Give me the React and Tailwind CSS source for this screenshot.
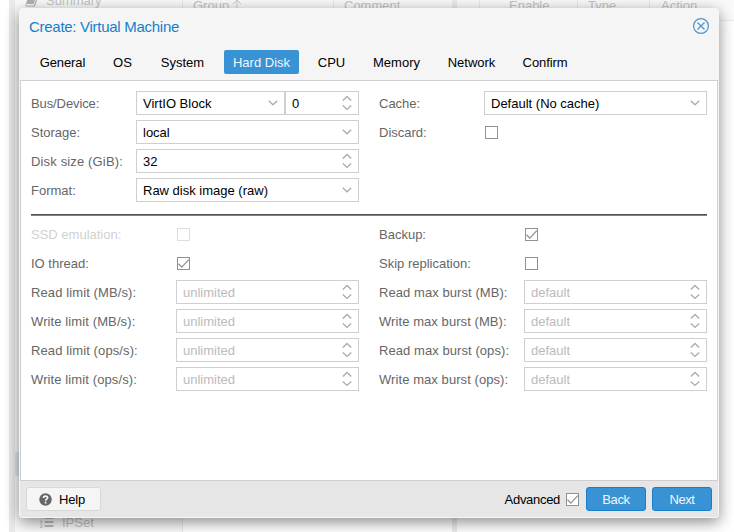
import React from "react";

const TABS = [
  ["General", "w-[63px]"],
  ["OS", "w-[37px]"],
  ["System", "w-[63px]"],
  ["Hard Disk", "w-[75px]"],
  ["CPU", "w-[45px]"],
  ["Memory", "w-[65px]"],
  ["Network", "w-[65px]"],
  ["Confirm", "w-[62px]"],
];

function Chevron() {
  return (
    <svg width="10" height="6" viewBox="0 0 10 6" className="shrink-0" fill="none" stroke="#adadad" strokeWidth="1.4">
      <path d="M.8 .8 5 4.8 9.200 .8" />
    </svg>
  );
}

function Spinner() {
  return (
    <svg width="10" height="16" viewBox="0 0 10 16" className="shrink-0" fill="none" stroke="#adadad" strokeWidth="1.4">
      <path d="M.8 5.500 5 1.500 9.200 5.500M.8 10.400 5 14.400 9.200 10.400" />
    </svg>
  );
}

function Field({ value, placeholder, spin, className = "flex-1" }) {
  return (
    <div className={`flex h-6 items-center justify-between border border-[#cfcfcf] bg-white pl-1.5 pr-[6px] ${className}`}>
      <span className={placeholder ? "text-[#bbbbbb]" : "text-black"}>{value}</span>
      {spin ? <Spinner /> : <Chevron />}
    </div>
  );
}

function Checkbox({ checked, disabled }) {
  return (
    <svg width="13" height="13" viewBox="0 0 13 13" className="shrink-0" fill="none">
      <rect x=".5" y=".5" width="12" height="12" fill="#fff" stroke={disabled ? "#dddddd" : "#919191"} />
      {checked && <path d="M1.5 6.800 4.800 10.100 11.800 2.600" stroke="#919191" strokeWidth="1.3" />}
    </svg>
  );
}

function Row({ label, wide, disabled, track = "", children }) {
  return (
    <div className="flex h-6 items-center">
      <span className={`shrink-0 ${track} ${wide ? "w-[145px]" : "w-[105px]"} ${disabled ? "text-[#d1d1d1]" : "text-[#666666]"}`}>
        {label}
      </span>
      {children}
    </div>
  );
}

function CheckRow({ checked, ...rest }) {
  return (
    <Row {...rest}>
      <div className="ml-px mt-px flex">
        <Checkbox checked={checked} disabled={rest.disabled} />
      </div>
    </Row>
  );
}

function Background() {
  return (
    <div className="flex h-full pl-[9px] text-[#c4c4c4]">
      <div className="w-[6px] bg-[#ebebeb]" />
      <div className="flex w-[168px] flex-col border-r border-[#e9e9e9] bg-[#fafafa]">
        <div className="flex h-5 items-start pl-[10px]">
          <svg width="13" height="7" viewBox="0 0 13 7" fill="none">
            <path d="M2.200 0H10L8.800 4H1z" fill="#b0b0b0" />
            <path d="M1 4.500Q.8 6 2 6H9.500L11.500 0" stroke="#b0b0b0" strokeWidth="1.200" />
          </svg>
          <span className="-mt-[9px] ml-2 leading-5">Summary</span>
        </div>
        <div className="mt-[432px] h-6 bg-[#dde7ed]" />
        <div className="mt-auto flex h-[20px] items-center pl-[25px]">
          <svg width="14" height="12" viewBox="0 0 14 12" fill="none" stroke="#bdbdbd">
            <path d="M4.500 2h9M4.500 6h9M4.500 10h9" strokeWidth="1.8" />
            <path d="M1.500 0v3M0 5h2L.5 7h2M0 9h2v2.500H0" strokeWidth=".8" />
          </svg>
          <span className="ml-[8px]">IPSet</span>
        </div>
      </div>
      <div className="flex h-[21px] w-[269px] border-b border-[#ececec] bg-[#fafafa] leading-5">
        <div className="flex w-[151px] border-r border-[#e9e9e9] pl-[10px]">
          <span className="-mt-[4px]">Group</span>
          <svg width="10" height="11" viewBox="0 0 10 11" fill="none" stroke="#cbcbcb" className="ml-[3px] -mt-px">
            <path d="M5 10.500V1M1 5 5 1 9 5" />
          </svg>
        </div>
        <span className="-mt-[4px] ml-[10px]">Comment</span>
      </div>
      <div className="w-[5px] bg-[#ececec]" />
      <div className="flex h-[21px] flex-1 border-b border-[#ececec] bg-[#fafafa] leading-5">
        <div className="w-[23px] border-r border-[#e9e9e9]" />
        <div className="w-[98px] border-r border-[#e9e9e9] pl-[29px]"><div className="-mt-[4px]">Enable</div></div>
        <div className="w-[72px] border-r border-[#e9e9e9] pl-[10px]"><div className="-mt-[4px]">Type</div></div>
        <div className="pl-[11px]"><div className="-mt-[4px]">Action</div></div>
      </div>
    </div>
  );
}

export default function App() {
  return (
    <div className="relative h-[532px] w-[734px] overflow-hidden bg-white font-['Liberation_Sans',Arial,sans-serif] text-[13px] leading-[17px] whitespace-nowrap">
      <Background />
      <div className="absolute left-[19px] top-2 flex h-[510px] w-[700px] flex-col rounded-[3px] border border-[#f5f5f5] bg-[#f5f5f5] shadow-[0_4px_15px_rgba(0,0,0,0.47)]">
        <div className="flex h-[34px] items-center justify-between pl-[9px] pr-[9px]">
          <span className="mt-px text-[15px] tracking-[-0.28px] text-[#157fcc]">Create: Virtual Machine</span>
          <svg width="16" height="16" viewBox="0 0 16 16" fill="none" stroke="#4b93cf">
            <circle cx="8" cy="8" r="7.400" strokeWidth="1.200" />
            <path d="M4.500 4.500 11.500 11.500M11.500 4.500 4.500 11.500" strokeWidth="1.200" />
          </svg>
        </div>
        <div className="mt-[7px] flex h-[31px] gap-[10px] pl-[11px]">
          {TABS.map(([name, width]) => (
            <div
              key={name}
              className={`flex h-6 items-center justify-center rounded-[2px] pt-px ${width} ${
                name === "Hard Disk" ? "bg-[#3892d4] text-[#f0f6fb]" : "text-black"
              } ${name === "General" || name === "Confirm" ? "tracking-[-0.1px]" : ""}`}
            >
              {name}
            </div>
          ))}
        </div>
        <div className="-mt-px h-[401px] border border-[#cfcfcf] bg-white pl-[10px] pr-[10px] pt-[10px]">
          <div className="flex gap-5">
            <div className="flex w-[328px] flex-col gap-[5px]">
              <Row label="Bus/Device:" track="tracking-[-0.1px]">
                <Field value="VirtIO Block" className="w-[149px]" />
                <Field value="0" spin />
              </Row>
              <Row label="Storage:"><Field value="local" /></Row>
              <Row label="Disk size (GiB):" track="tracking-[0.15px]"><Field value="32" spin /></Row>
              <Row label="Format:"><Field value="Raw disk image (raw)" /></Row>
            </div>
            <div className="flex w-[328px] flex-col gap-[5px]">
              <Row label="Cache:"><Field value="Default (No cache)" /></Row>
              <CheckRow label="Discard:" />
            </div>
          </div>
          <div className="mb-[6px] mt-[12px] h-[2px] border-t border-[#555555] bg-[#808080]" />
          <div className="flex gap-5">
            <div className="flex w-[328px] flex-col gap-[5px]">
              <CheckRow wide disabled label="SSD emulation:" />
              <CheckRow wide checked label="IO thread:" />
              {["Read limit (MB/s):", "Write limit (MB/s):", "Read limit (ops/s):", "Write limit (ops/s):"].map((label) => (
                <Row key={label} wide label={label} track="tracking-[0.11px]"><Field value="unlimited" placeholder spin /></Row>
              ))}
            </div>
            <div className="flex w-[328px] flex-col gap-[5px]">
              <CheckRow wide checked label="Backup:" />
              <CheckRow wide label="Skip replication:" />
              {["Read max burst (MB):", "Write max burst (MB):", "Read max burst (ops):", "Write max burst (ops):"].map((label) => (
                <Row key={label} wide label={label} track="tracking-[0.07px]"><Field value="default" placeholder spin /></Row>
              ))}
            </div>
          </div>
        </div>
        <div className="flex flex-1 items-center rounded-b-[2px] bg-[#e6e6e6] pl-[6px] pr-[6px]">
          <div className="flex h-6 w-[75px] items-center rounded-[3px] border border-[#d8d8d8] bg-[#f5f5f5] pl-3 text-black">
            <svg width="13" height="13" viewBox="0 0 13 13" fill="none">
              <circle cx="6.500" cy="6.500" r="6.200" fill="#666" />
              <path d="M4.400 5C4.500 2.500 8.600 2.600 8.600 4.800 8.600 6.200 6.600 6.100 6.600 7.700M6.600 8.800V10.500" stroke="#f5f5f5" strokeWidth="1.700" />
            </svg>
            <span className="ml-[7px] tracking-[-0.2px]">Help</span>
          </div>
          <span className="ml-auto mt-px tracking-[-0.3px] text-black">Advanced</span>
          <div className="ml-[6px] mt-px flex"><Checkbox checked /></div>
          <div className="ml-[7px] flex h-6 w-[60px] items-center justify-center rounded-[3px] border border-[#157fcc] bg-[#3892d4] tracking-[-0.4px] text-[#f0f6fb]">Back</div>
          <div className="ml-[6px] flex h-6 w-[60px] items-center justify-center rounded-[3px] border border-[#157fcc] bg-[#3892d4] tracking-[-0.4px] text-[#f0f6fb]">Next</div>
        </div>
      </div>
    </div>
  );
}
